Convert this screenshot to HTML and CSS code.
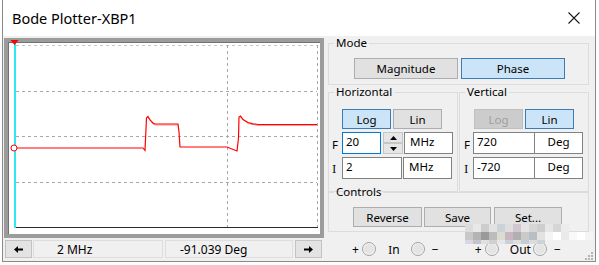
FILE: index.html
```html
<!DOCTYPE html>
<html>
<head>
  <title>Bode Plotter-XBP1</title>
  <meta charset="UTF-8">
  <link rel="stylesheet" href="styles.css">
</head>
<body>
  <div class="window">
    <div class="titlebar">
      <span class="title">Bode Plotter-XBP1</span>
      <svg class="close" width="12" height="12" viewBox="0 0 12 12">
        <path d="M0.5 0.5 L11.5 11.5 M11.5 0.5 L0.5 11.5" stroke="#1a1a1a" stroke-width="1.1" fill="none"/>
      </svg>
    </div>

    <div class="client">
      <div class="left">
        <div class="plot">
          <svg width="312" height="192" viewBox="0 0 312 192">
            <!-- grid -->
            <line x1="8" y1="3.5" x2="309" y2="3.5" class="grid light"/>
            <line x1="8" y1="49.5" x2="309" y2="49.5" class="grid"/>
            <line x1="8" y1="94.5" x2="309" y2="94.5" class="grid"/>
            <line x1="8" y1="140.5" x2="309" y2="140.5" class="grid"/>
            <line x1="219.5" y1="3" x2="219.5" y2="185" class="grid"/>
            <line x1="309.5" y1="3" x2="309.5" y2="185" class="grid"/>
            <line x1="6" y1="185.5" x2="310" y2="185.5" stroke="#2b2b2b" stroke-width="1"/>
            <!-- cursor -->
            <rect x="6" y="0" width="2" height="186" fill="#2fe8f0"/>
            <polygon points="2.5,-2 10.5,-2 6.5,3" fill="#ff0000"/>
            <!-- trace -->
            <polyline class="trace shade" points="140,75.5 145,82 147,83 170,83"/>
            <polyline class="trace shade" points="232,75 240,81.5 250,83.5 309,83.5"/>
            <polyline class="trace" points="6,106 135,106 137,108.5 138.5,76 140,74.5 142,78 145,81 147,82 170,82 171,90 172,105 219,105 229,109 230.5,96 231,75 232.5,74 235,77.5 240,80.5 245,81.8 250,82.5 309,82.5"/>
            <circle cx="6" cy="106" r="3" fill="#fff" stroke="#ff0000" stroke-width="1"/>
          </svg>
        </div>
        <div class="status">
          <div class="arrow">
            <svg width="9" height="7" viewBox="0 0 9 7"><path d="M0 3.5 L4 0 V2.5 H9 V4.5 H4 V7 Z" fill="#000"/></svg>
          </div>
          <div class="field freq">2 MHz</div>
          <div class="field phase">-91.039 Deg</div>
          <div class="arrow">
            <svg width="9" height="7" viewBox="0 0 9 7"><path d="M9 3.5 L5 0 V2.5 H0 V4.5 H5 V7 Z" fill="#000"/></svg>
          </div>
        </div>
      </div>

      <div class="right">
        <fieldset class="group">
          <legend>Mode</legend>
          <div class="mode-row">
            <div class="btn wide">Magnitude</div>
            <div class="btn wide on">Phase</div>
          </div>
        </fieldset>

        <div class="axes">
          <fieldset class="group axis horiz">
            <legend>Horizontal</legend>
            <div class="scale-row">
              <div class="btn small on">Log</div>
              <div class="btn small">Lin</div>
            </div>
            <div class="edit-row first">
              <span class="lbl">F</span>
              <div class="edit short focus">20</div>
              <div class="spin">
                <div class="spin-half"><svg width="7" height="4" viewBox="0 0 7 4"><path d="M0 4 L3.5 0 L7 4 Z" fill="#000"/></svg></div>
                <div class="spin-half"><svg width="7" height="4" viewBox="0 0 7 4"><path d="M0 0 L3.5 4 L7 0 Z" fill="#000"/></svg></div>
              </div>
              <div class="edit unit">MHz</div>
            </div>
            <div class="edit-row">
              <span class="lbl serif">I</span>
              <div class="edit long">2</div>
              <div class="edit unit">MHz</div>
            </div>
          </fieldset>

          <fieldset class="group axis vert">
            <legend>Vertical</legend>
            <div class="scale-row">
              <div class="btn small off">Log</div>
              <div class="btn small on">Lin</div>
            </div>
            <div class="edit-row first">
              <span class="lbl">F</span>
              <div class="edit value">720</div>
              <div class="edit unit center">Deg</div>
            </div>
            <div class="edit-row">
              <span class="lbl serif">I</span>
              <div class="edit value">-720</div>
              <div class="edit unit center">Deg</div>
            </div>
          </fieldset>
        </div>

        <fieldset class="group controls">
          <legend>Controls</legend>
          <div class="ctrl-row">
            <div class="btn reverse">Reverse</div>
            <div class="btn save">Save</div>
            <div class="btn set">Set...</div>
          </div>
        </fieldset>

        <div class="terminals">
          <span class="sign">+</span><span class="pin"></span>
          <span class="term"><span class="serif">I</span>n</span>
          <span class="pin"></span><span class="sign minus">&minus;</span>
          <span class="sign plus2">+</span><span class="pin"></span>
          <span class="term out">Out</span>
          <span class="pin"></span><span class="sign minus">&minus;</span>
        </div>
      </div>

      <div class="mosaic">
        <div class="m-row">
          <i style="background:#dcdcdc"></i><i style="background:#e8e8e8"></i><i style="background:#cdcdcd"></i><i style="background:#e2e2e2"></i><i style="background:#cad2da"></i><i style="background:#dedede"></i><i style="background:#d2c6d0"></i><i style="background:#e4e4e4"></i><i style="background:#d6d6d6"></i><i style="background:#cecece"></i><i style="background:#e6e6e6"></i><i style="background:#d6d6d6"></i><i style="background:#ececec"></i>
        </div>
        <div class="m-row">
          <i style="background:#c8c8c8"></i><i style="background:#b4b4b4"></i><i style="background:#9a9a9a"></i><i style="background:#bcbcbc"></i><i style="background:#dcdcd0"></i><i style="background:#c8b6c2"></i><i style="background:#b0b0b0"></i><i style="background:#cacaca"></i><i style="background:#b8bec6"></i><i style="background:#e2e2e2"></i><i style="background:#f4f4f4"></i><i style="background:#ffffff"></i><i style="background:#eaeaea"></i><i style="background:#f8f8f8"></i><i style="background:#ffffff"></i><i style="background:#f4f4f4"></i>
        </div>
        <div class="m-row thin">
          <i style="background:#d8d8e0"></i><i style="background:#c4c4ce"></i><i style="background:#e0e0e0"></i><i style="background:#d0d0d0"></i><i style="background:#e6e6e6"></i><i style="background:#ceced6"></i><i style="background:#dedede"></i><i style="background:#c6ccd4"></i><i style="background:#dcdcdc"></i><i style="background:#ccd2da"></i>
        </div>
      </div>

      <svg class="grip" width="9" height="9" viewBox="0 0 9 9">
        <rect x="7" y="1" width="2" height="2" fill="#b4b4b4"/>
        <rect x="4" y="4" width="2" height="2" fill="#b4b4b4"/>
        <rect x="7" y="4" width="2" height="2" fill="#b4b4b4"/>
        <rect x="1" y="7" width="2" height="2" fill="#b4b4b4"/>
        <rect x="4" y="7" width="2" height="2" fill="#b4b4b4"/>
        <rect x="7" y="7" width="2" height="2" fill="#b4b4b4"/>
      </svg>
    </div>
  </div>
</body>
</html>
```

FILE: styles.css
```css
body {
  margin: 0;
  background: #fff;
  font-family: "Noto Sans", "Open Sans", sans-serif;
  font-size: 11.5px;
  color: #000;
}

.window {
  position: relative;
  margin-left: 2px;
  width: 592px;
  height: 261px;
  border: 1px solid #8a8a8a;
  border-top: none;
  background: #f0f0f0;
}

.titlebar {
  height: 36px;
  background: #fff;
  display: flex;
  align-items: center;
  justify-content: space-between;
  padding: 0 15px 0 9px;
}

.title {
  font-size: 14.5px;
  color: #000;
}

.client {
  display: flex;
  height: 225px;
}

/* plot side */

.left {
  margin-left: 1px;
  padding-top: 2px;
}

.plot {
  width: 312px;
  height: 192px;
  border: 4px solid #9c9c9c;
  box-shadow: inset 1px 1px 0 #727272;
  background: #fff;
}

.plot svg {
  display: block;
  overflow: visible;
}

.grid {
  stroke: #a8a8a8;
  stroke-width: 1;
  stroke-dasharray: 3 3;
}

.grid.light {
  stroke: #c6c6c6;
}

.trace {
  fill: none;
  stroke: #ff0000;
  stroke-width: 1.2;
}

.trace.shade {
  stroke: #ff9a9a;
  stroke-width: 1;
}

.status {
  display: flex;
  margin: 2px 0 0 1px;
  height: 18px;
}

.arrow {
  width: 27px;
  height: 18px;
  box-sizing: border-box;
  border: 1px solid #c2c2c2;
  background: #e3e3e3;
  display: flex;
  align-items: center;
  justify-content: center;
}

.field {
  height: 18px;
  box-sizing: border-box;
  border: 1px solid #dedede;
  display: flex;
  align-items: center;
  font-size: 12px;
}

.field.freq {
  width: 130px;
  margin-left: 1px;
  padding-left: 23px;
}

.field.phase {
  width: 128px;
  margin: 0 2px;
  padding-left: 14px;
}

/* control side */

.right {
  width: 261px;
  margin-left: 4px;
}

.group {
  margin: 0;
  padding: 0;
  border: 1px solid #dcdcdc;
  min-width: 0;
}

.group legend {
  padding: 0 2px;
  margin-left: 5px;
  line-height: 14px;
  background: #f0f0f0;
}

.btn {
  box-sizing: border-box;
  height: 20px;
  border: 1px solid #adadad;
  background: #e1e1e1;
  display: flex;
  align-items: center;
  justify-content: center;
}

.btn.on {
  background: #cce4f7;
  border-color: #3d7bb5;
}

.btn.off {
  background: #cccccc;
  border-color: #bfbfbf;
  color: #a0a0a0;
}

.mode-row {
  display: flex;
  gap: 3px;
  padding: 8px 0 5px 25px;
}

.btn.wide {
  width: 104px;
  height: 21px;
}

.axes {
  display: flex;
  gap: 1px;
}

.axis {
  width: 130px;
  box-sizing: border-box;
  padding-bottom: 10px;
}

.scale-row {
  display: flex;
  gap: 2px;
  padding-top: 10px;
}

.horiz .scale-row {
  margin-left: 13px;
}

.vert .scale-row {
  margin-left: 14px;
}

.btn.small {
  width: 49px;
}

.edit-row {
  display: flex;
  margin-top: 1px;
}

.edit-row.first {
  margin-top: 3px;
}

.lbl {
  width: 10px;
  line-height: 22px;
  padding-top: 2px;
}

.horiz .lbl {
  margin-left: 3px;
}

.vert .lbl {
  margin-left: 4px;
  width: 9px;
}

.serif {
  font-family: "DejaVu Serif", serif;
  font-size: 11px;
}

.edit {
  box-sizing: border-box;
  height: 22px;
  border: 1px solid #828282;
  background: #fff;
  padding: 0 3px;
  line-height: 18px;
}

.edit.focus {
  border-color: #0078d7;
}

.edit.short {
  width: 39px;
}

.edit.long {
  width: 60px;
}

.edit.unit {
  width: 49px;
  margin-left: 1px;
  padding-left: 5px;
}

.edit.value {
  width: 62px;
}

.vert .edit.unit {
  margin-left: -1px;
}

.edit.center {
  text-align: center;
  padding: 0;
}

.spin {
  width: 20px;
  height: 22px;
  margin-left: 2px;
  display: flex;
  flex-direction: column;
}

.spin-half {
  flex: 1;
  box-sizing: border-box;
  border: 1px solid #c6c6c6;
  background: #e6e6e6;
  display: flex;
  align-items: center;
  justify-content: center;
}

.controls {
  margin-top: -7px;
}

.ctrl-row {
  display: flex;
  padding: 8px 0 4px 24px;
}

.btn.reverse {
  width: 69px;
}

.btn.save {
  width: 67px;
  margin-left: 2px;
}

.btn.set {
  width: 68px;
  margin-left: 3px;
}

.terminals {
  display: flex;
  align-items: center;
  height: 16px;
  margin-top: 9px;
  padding-left: 24px;
  font-size: 12px;
}

.sign {
  width: 7px;
  margin-right: 3px;
}

.sign.minus {
  margin-left: 7px;
}

.sign.plus2 {
  margin-left: 33px;
}

.pin {
  width: 14px;
  height: 14px;
  box-sizing: border-box;
  border-radius: 50%;
  border: 1px solid #a4a4a4;
  background: #e4e4e4;
  box-shadow: inset 0 0 0 1px #f6f6f6;
}

.term {
  margin: 0 11px 0 12px;
}

.term.out {
  margin: 0 2px 0 11px;
}

.mosaic {
  position: absolute;
  left: 462px;
  top: 224px;
}

.m-row {
  display: flex;
}

.m-row i {
  display: block;
  width: 8px;
  height: 8px;
}

.m-row.thin i {
  height: 4px;
}

.grip {
  position: absolute;
  right: 2px;
  bottom: 1px;
}
```
